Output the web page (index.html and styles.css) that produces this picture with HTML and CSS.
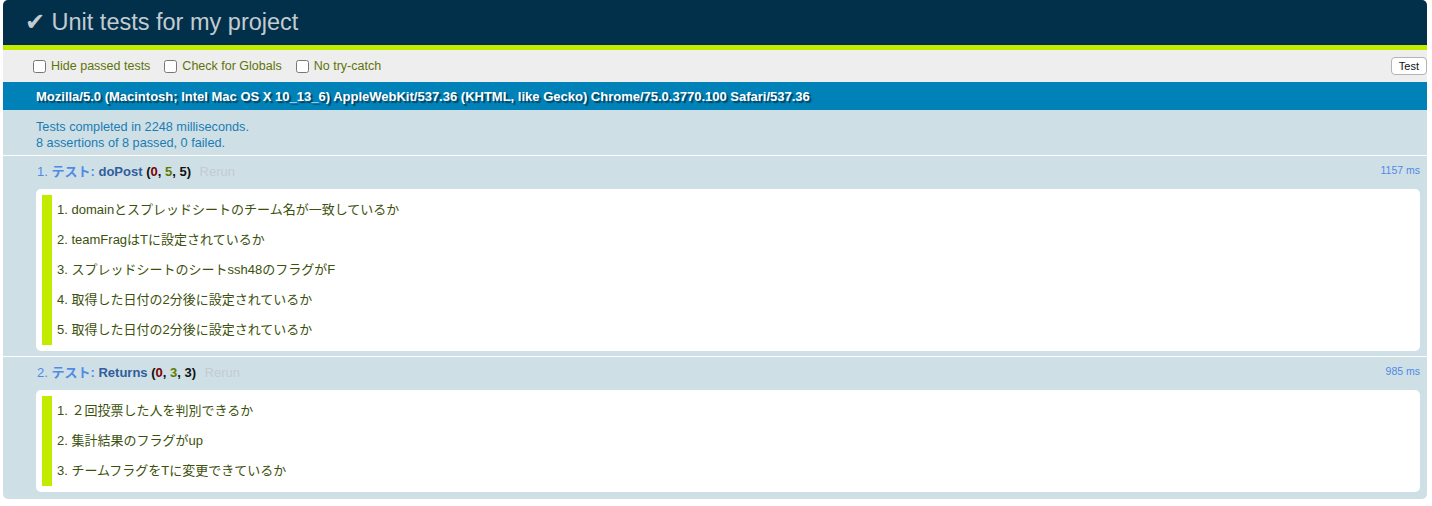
FILE: index.html
```html
<!DOCTYPE html>
<html lang="ja">
<head>
<meta charset="utf-8">
<title>Unit tests for my project</title>
<link rel="stylesheet" href="styles.css">
</head>
<body>
<div class="qunit">
  <h1 class="qunit-header"><a href="#">✔ Unit tests for my project</a></h1>
  <div class="qunit-banner"></div>
  <div class="toolbar">
    <label class="opt"><input type="checkbox"> Hide passed tests</label>
    <label class="opt"><input type="checkbox"> Check for Globals</label>
    <label class="opt"><input type="checkbox"> No try-catch</label>
    <button class="test-btn" type="button">Test</button>
  </div>
  <h2 class="user-agent">Mozilla/5.0 (Macintosh; Intel Mac OS X 10_13_6) AppleWebKit/537.36 (KHTML, like Gecko) Chrome/75.0.3770.100 Safari/537.36</h2>
  <p class="test-result">Tests completed in 2248 milliseconds.<br>8 assertions of 8 passed, 0 failed.</p>
  <ol class="tests">
    <li class="test pass">
      <div class="test-head">
        <span class="runtime">1157 ms</span>
        <strong><span class="module-name">テスト</span>: <span class="test-name">doPost</span> <b class="counts">(<b class="failed">0</b>, <b class="passed">5</b>, 5)</b></strong>
        <a class="rerun" href="#">Rerun</a>
      </div>
      <ol class="asserts">
        <li>domainとスプレッドシートのチーム名が一致しているか</li>
        <li>teamFragはTに設定されているか</li>
        <li>スプレッドシートのシートssh48のフラグがF</li>
        <li>取得した日付の2分後に設定されているか</li>
        <li>取得した日付の2分後に設定されているか</li>
      </ol>
    </li>
    <li class="test pass">
      <div class="test-head">
        <span class="runtime">985 ms</span>
        <strong><span class="module-name">テスト</span>: <span class="test-name">Returns</span> <b class="counts">(<b class="failed">0</b>, <b class="passed">3</b>, 3)</b></strong>
        <a class="rerun" href="#">Rerun</a>
      </div>
      <ol class="asserts">
        <li>２回投票した人を判別できるか</li>
        <li>集計結果のフラグがup</li>
        <li>チームフラグをTに変更できているか</li>
      </ol>
    </li>
  </ol>
</div>
</body>
</html>
```

FILE: styles.css
```css
html, body {
  margin: 0;
  padding: 0;
  background: #ffffff;
}

.qunit {
  margin: 0 5px 0 3px;
  font-family: "Liberation Sans", Arial, "Noto Sans CJK JP", sans-serif;
}

.qunit-header {
  margin: 0;
  padding: 10px 0 11px 22px;
  background-color: #02304a;
  font-size: 23.5px;
  line-height: 24px;
  font-weight: normal;
  border-radius: 5px 5px 0 0;
}

.qunit-header a {
  color: #c2ccd1;
  text-decoration: none;
}

.qunit-banner {
  height: 5px;
  background-color: #c1ec00;
}

.toolbar {
  display: flex;
  align-items: center;
  height: 32px;
  padding: 0 0 0 26px;
  background-color: #eeeeee;
  color: #5e740b;
  font-size: 12.5px;
}

.opt {
  display: flex;
  align-items: center;
  margin-right: 10px;
}

.opt input {
  width: 13px;
  height: 13px;
  margin: 0 5px 0 4px;
}

.test-btn {
  margin-left: auto;
  height: 18px;
  padding: 0 7px;
  background: #ffffff;
  border: 1px solid #b4b4b4;
  border-radius: 4px;
  font-family: "Liberation Sans", Arial, sans-serif;
  font-size: 11px;
  line-height: 16px;
  color: #111111;
}

.user-agent {
  margin: 0;
  padding: 0 0 0 33px;
  height: 28px;
  line-height: 29px;
  background-color: #0081b8;
  color: #ffffff;
  font-size: 13px;
  font-weight: bold;
  text-shadow: rgba(0, 0, 0, 0.5) 2px 2px 1px;
  white-space: nowrap;
}

.test-result {
  margin: 0;
  padding: 8.5px 6px 4.5px 33px;
  line-height: 16px;
  background-color: #cfdfe6;
  color: #1a7db2;
  font-size: 12.7px;
  border-bottom: 1px solid #ffffff;
}

.tests {
  margin: 0;
  padding: 0;
  list-style: none;
}

.test {
  padding: 6px 7px 5px 33px;
  background-color: #cfdfe6;
  border-bottom: 1px solid #ffffff;
  font-size: 13px;
  color: #4f8ae6;
  counter-increment: test;
}

.test:last-child {
  border-radius: 0 0 5px 5px;
  border-bottom: none;
  padding-bottom: 7px;
}

.test-head {
  line-height: 20px;
  padding-left: 1px;
}

.test-head::before {
  content: counter(test) ". ";
}

.module-name {
  color: #4f8ae6;
}

.test-name {
  color: #2f5e9c;
}

.counts {
  color: #111111;
}

.counts .failed {
  color: #7a0000;
}

.counts .passed {
  color: #5e7a00;
}

.rerun {
  padding: 0 5px;
  color: #c2ccd1;
  text-decoration: none;
}

.runtime {
  float: right;
  font-size: 10.5px;
  line-height: 16px;
  color: #4f8ae6;
}

.asserts {
  margin: 7px 0 0 0;
  padding: 6px;
  background-color: #ffffff;
  border-radius: 5px;
  list-style: decimal inside;
}

.asserts li {
  padding: 5px 5px 5px 5px;
  line-height: 20px;
  border-left: 10px solid #c1ec00;
  color: #3c510c;
  font-size: 13px;
}
```
